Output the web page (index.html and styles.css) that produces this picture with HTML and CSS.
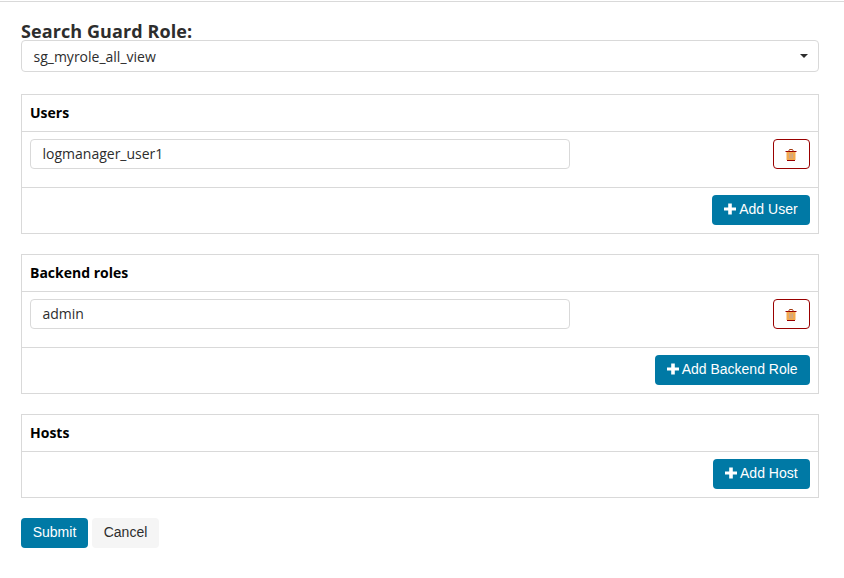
FILE: index.html
```html
<!DOCTYPE html>
<html lang="en">
<head>
<meta charset="utf-8">
<title>Search Guard Role Mapping</title>
<link rel="stylesheet" href="styles.css">
</head>
<body>
<svg class="defs" width="0" height="0">
  <symbol id="plus" viewBox="0 0 12 12"><path d="M4.2 0.5h3.6v3.9H12v3.2H7.8v3.9H4.2V7.6H0V4.4h4.2z"/></symbol>
  <symbol id="trash" viewBox="0 0 12 13">
    <path d="M1.500 3h9v8h-9z" fill="#f3a94e"/>
    <path d="M4.500 4.500v5M6 4.500v5M7.500 4.500v5" stroke="#b9a8a8" stroke-width=".7" fill="none"/>
    <path d="M.5 2.500h11M2 11.500h8" stroke="#900" fill="none"/>
    <path d="M3.500 2.500L4.500 .5h3L8.500 2.500" stroke="#a33a10" fill="none"/>
  </symbol>
</svg>
<main class="page">
  <label class="title" for="role">Search Guard Role:</label>
  <div class="select" id="role"><span>sg_myrole_all_view</span><svg class="caret" width="8" height="4" viewBox="0 0 8 4"><path d="M0 0h8L4 4z"/></svg></div>

  <section class="panel">
    <h2 class="panel-head">Users</h2>
    <div class="panel-row">
      <div class="input">logmanager_user1</div>
      <button class="btn-delete" aria-label="Delete"><svg width="12" height="13"><use href="#trash"/></svg></button>
    </div>
    <div class="panel-foot"><button class="btn primary"><svg class="plus" width="12" height="12"><use href="#plus"/></svg>Add User</button></div>
  </section>

  <section class="panel">
    <h2 class="panel-head">Backend roles</h2>
    <div class="panel-row">
      <div class="input">admin</div>
      <button class="btn-delete" aria-label="Delete"><svg width="12" height="13"><use href="#trash"/></svg></button>
    </div>
    <div class="panel-foot"><button class="btn primary"><svg class="plus" width="12" height="12"><use href="#plus"/></svg>Add Backend Role</button></div>
  </section>

  <section class="panel">
    <h2 class="panel-head">Hosts</h2>
    <div class="panel-foot"><button class="btn primary"><svg class="plus" width="12" height="12"><use href="#plus"/></svg>Add Host</button></div>
  </section>

  <div class="actions"><button class="btn primary">Submit</button><button class="btn plain">Cancel</button></div>
</main>
</body>
</html>
```
FILE: styles.css
```css
* { box-sizing: border-box; }
body {
  margin: 0;
  padding-top: 1px;
  background: #fff;
  color: #2d2d2d;
  font: 14px/20px "Open Sans", sans-serif;
}
.defs { display: block; }
.page {
  border-top: 1px solid #d9d9d9;
  padding: 19px 25px 0 21px;
}
.title {
  display: block;
  height: 19px;
  font-size: 18px;
  line-height: 20px;
  font-weight: 700;
  letter-spacing: 0.09px;
}
.select {
  display: flex;
  align-items: center;
  justify-content: space-between;
  height: 32px;
  padding: 0 10px 0 11.5px;
  margin-bottom: 22px;
  border: 1px solid #d9d9d9;
  border-radius: 4px;
}
.select span { padding-top: 2px; }
.caret { fill: #2d2d2d; }
.panel {
  margin-bottom: 20px;
  border: 1px solid #d9d9d9;
}
.panel-head {
  margin: 0;
  height: 36px;
  padding-left: 8px;
  font-size: 14px;
  line-height: 36px;
  font-weight: 700;
  color: #000;
}
.panel-row {
  display: flex;
  justify-content: space-between;
  height: 56px;
  padding: 7px 8px 0;
  border-top: 1px solid #d9d9d9;
}
.input {
  width: 540px;
  height: 30px;
  padding-left: 11.5px;
  line-height: 28px;
  border: 1px solid #d9d9d9;
  border-radius: 4px;
}
.btn-delete {
  display: flex;
  align-items: flex-start;
  width: 37px;
  height: 30px;
  padding: 9px 0 0 11px;
  background: #fff;
  border: 1px solid #900;
  border-radius: 4px;
}
.panel-foot {
  display: flex;
  justify-content: flex-end;
  height: 46px;
  padding: 7px 8px 0;
  border-top: 1px solid #d9d9d9;
}
.btn {
  display: flex;
  align-items: center;
  height: 30px;
  padding: 0 12.4px 2px 12px;
  border: 0;
  border-radius: 4px;
  font: 14px/20px "Liberation Sans", Arial, sans-serif;
  white-space: nowrap;
}
.primary { background: #0079a5; color: #fff; }
.plain { background: #f5f5f5; color: #2d2d2d; }
.plus { fill: #fff; margin-right: 3px; }
.actions { display: flex; gap: 4px; }
.actions .btn { width: 67px; justify-content: center; padding: 0 0 2px; }
```
